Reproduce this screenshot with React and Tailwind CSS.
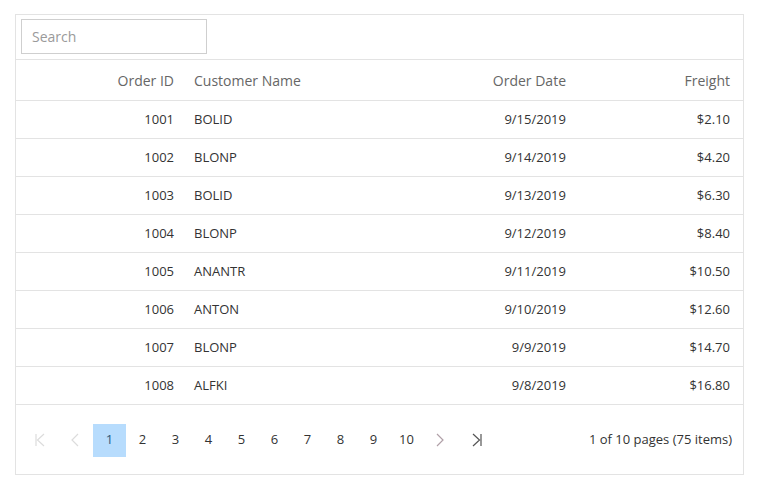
const rows = [
  [1001, 'BOLID', '9/15/2019', '$2.10'],
  [1002, 'BLONP', '9/14/2019', '$4.20'],
  [1003, 'BOLID', '9/13/2019', '$6.30'],
  [1004, 'BLONP', '9/12/2019', '$8.40'],
  [1005, 'ANANTR', '9/11/2019', '$10.50'],
  [1006, 'ANTON', '9/10/2019', '$12.60'],
  [1007, 'BLONP', '9/9/2019', '$14.70'],
  [1008, 'ALFKI', '9/8/2019', '$16.80'],
]

const cols = 'grid grid-cols-[168px_200px_192px_1fr]'

function FirstIcon({ className }) {
  return (
    <svg className={className} width="12" height="14" viewBox="0 0 12 14" fill="none" stroke="currentColor" strokeWidth="1.2">
      <path d="M2 1v12M10 1L3.5 7l6.5 6" />
    </svg>
  )
}

function LastIcon({ className }) {
  return (
    <svg className={className} width="12" height="14" viewBox="0 0 12 14" fill="none" stroke="currentColor" strokeWidth="1.2">
      <path d="M10 1v12M2 1l6.5 6L2 13" />
    </svg>
  )
}

function Chevron({ className, dir }) {
  return (
    <svg className={className} width="8" height="14" viewBox="0 0 8 14" fill="none" stroke="currentColor" strokeWidth="1.2">
      <path d={dir === 'left' ? 'M7 1L1 7l6 6' : 'M1 1l6 6-6 6'} />
    </svg>
  )
}

export default function App() {
  return (
    <div className="w-[763px] h-[489px] bg-white pt-[14px] pl-[15px] font-['Open_Sans','Noto_Sans',sans-serif]">
      <div className="w-[729px] h-[461px] border border-[#e3e3e3] flex flex-col">
        {/* Toolbar */}
        <div className="h-[45px] border-b border-[#e3e3e3] pl-[5px] pt-[4px]">
          <div className="w-[186px] h-[35px] border border-[#cfcfcf] flex items-center px-[10px] text-[14px] text-[#9a9a9a]">
            Search
          </div>
        </div>

        {/* Header */}
        <div className={`${cols} h-[41px] items-center border-b border-[#e3e3e3] text-[14px] text-[#666]`}>
          <div className="text-right pr-[10px]">Order ID</div>
          <div className="pl-[10px]">Customer Name</div>
          <div className="text-right pr-[10px]">Order Date</div>
          <div className="text-right pr-[13px]">Freight</div>
        </div>

        {/* Rows */}
        {rows.map(([id, name, date, freight]) => (
          <div key={id} className={`${cols} h-[38px] items-center border-b border-[#e3e3e3] text-[13px] text-[#333]`}>
            <div className="text-right pr-[10px]">{id}</div>
            <div className="pl-[10px]">{name}</div>
            <div className="text-right pr-[10px]">{date}</div>
            <div className="text-right pr-[13px]">{freight}</div>
          </div>
        ))}

        {/* Pager */}
        <div className="flex-1 flex items-center pl-[7px] pr-[11px] pt-[1px] text-[13px] text-[#333]">
          <div className="flex items-center">
            <div className="w-[33px] h-[33px] flex items-center justify-center text-[#dcdcdc]">
              <FirstIcon />
            </div>
            <div className="w-[33px] h-[33px] flex items-center justify-center text-[#dcdcdc] ml-[2px]">
              <Chevron dir="left" />
            </div>
            <div className="w-[33px] h-[33px] flex items-center justify-center bg-[#b7dcfd] text-[#2d5a7a] ml-[2px]">1</div>
            {[2, 3, 4, 5, 6, 7, 8, 9, 10].map((n) => (
              <div key={n} className="w-[33px] h-[33px] flex items-center justify-center">
                {n}
              </div>
            ))}
            <div className="w-[33px] h-[33px] flex items-center justify-center text-[#b0a0a8]">
              <Chevron dir="right" />
            </div>
            <div className="w-[33px] h-[33px] flex items-center justify-center text-[#555] ml-[4px]">
              <LastIcon />
            </div>
          </div>
          <div className="ml-auto">1 of 10 pages (75 items)</div>
        </div>
      </div>
    </div>
  )
}
